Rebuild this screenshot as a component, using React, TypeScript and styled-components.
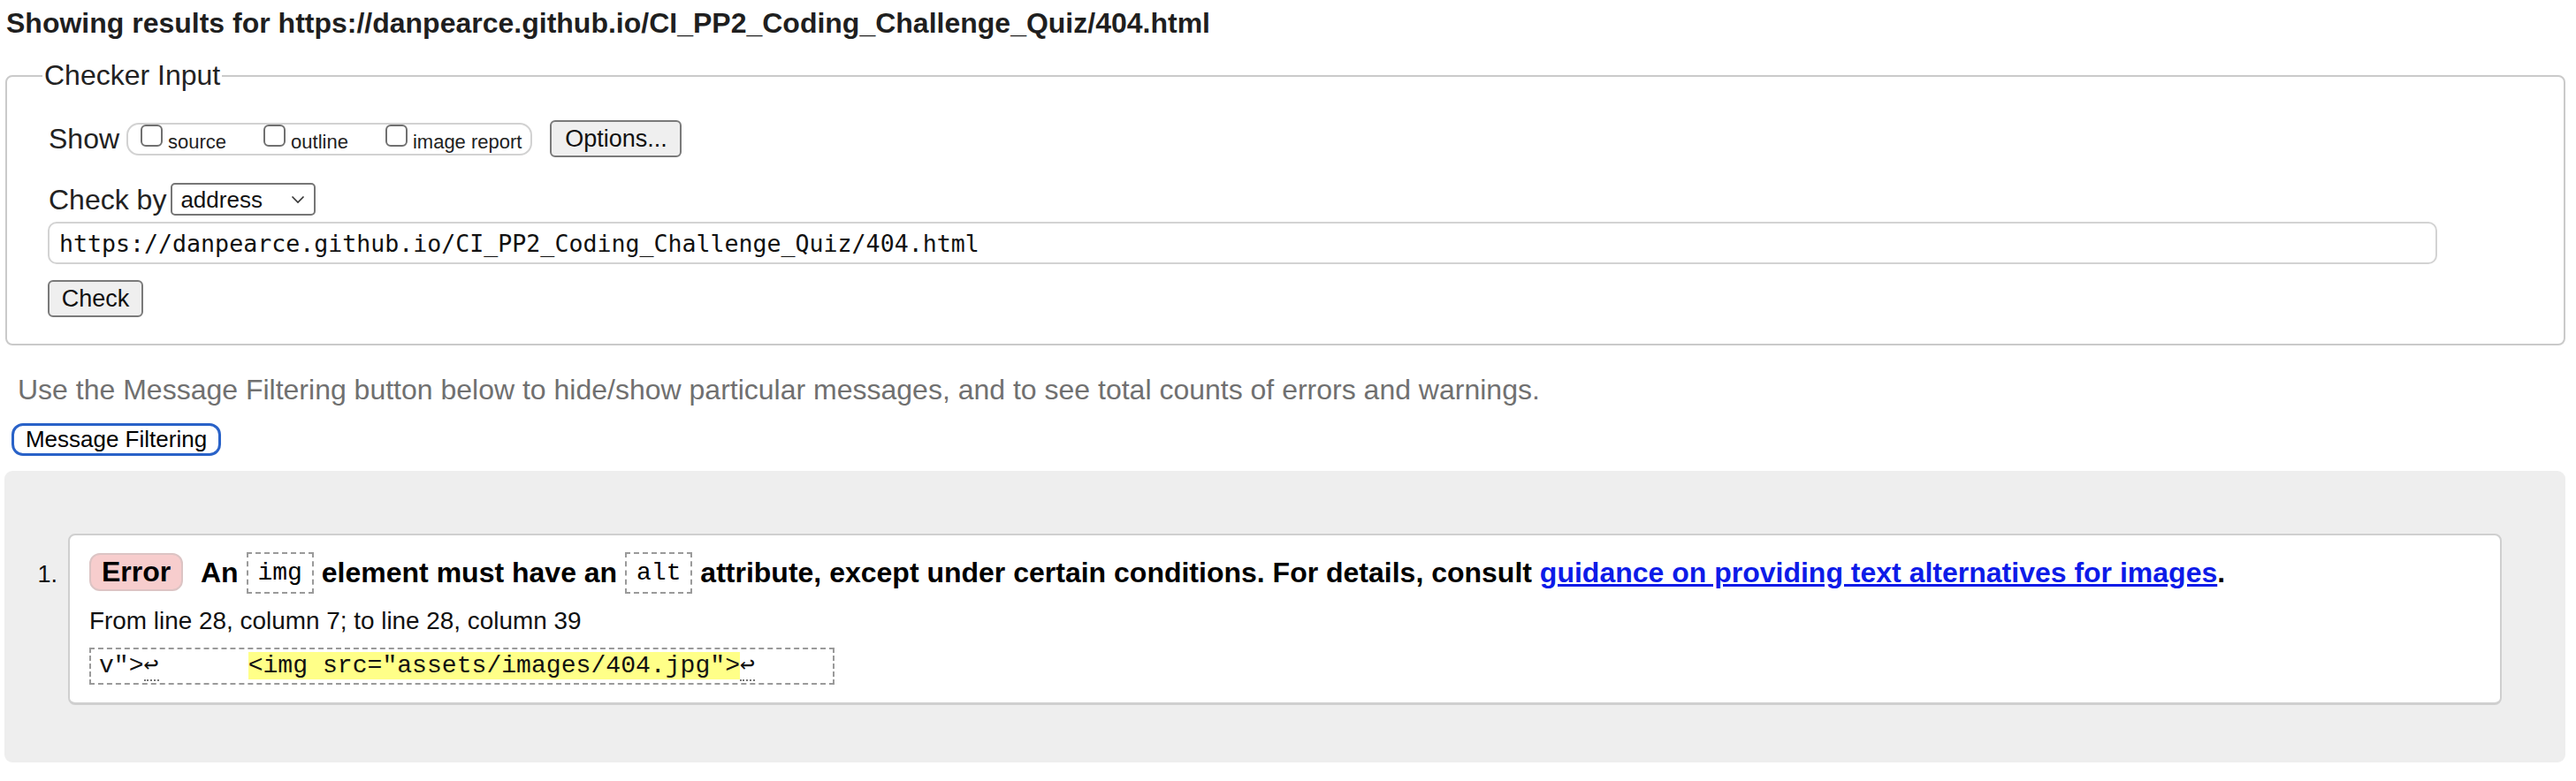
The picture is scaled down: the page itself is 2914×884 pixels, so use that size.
import React from "react";
import styled, { createGlobalStyle } from "styled-components";

const Global = createGlobalStyle`
  html, body { margin: 0; padding: 0; background: #fff; }
  body { font-family: "Liberation Sans", Arial, Helvetica, sans-serif; color: #222; }
  * { box-sizing: border-box; }
`;

const Page = styled.div`
  padding: 0 12px 20px 5px;
  width: 2914px;
`;

const Heading = styled.h2`
  margin: 8px 0 0 2px;
  font-size: 32px;
  line-height: 37px;
  font-weight: 700;
  color: #1f1f1f;
`;

const Fieldset = styled.fieldset`
  margin: 22px 0 0 1px;
  border: 2px solid #cacaca;
  border-radius: 8px;
  padding: 32px 142px 30px 47px;
  min-inline-size: 0;
`;

const Legend = styled.legend`
  font-size: 32px;
  line-height: 37px;
  padding: 0 2px;
  margin-left: -7px;
  color: #222;
`;

const Row = styled.div<{ $h: number; $mt?: number }>`
  display: flex;
  align-items: center;
  height: ${(p) => p.$h}px;
  margin-top: ${(p) => p.$mt ?? 0}px;
`;

const Label = styled.span`
  font-size: 32px;
  color: #222;
  margin-right: 8px;
  line-height: 1;
`;

const Pill = styled.div`
  display: flex;
  align-items: flex-start;
  height: 37px;
  border: 2px solid #d2d2d2;
  border-radius: 14px;
  padding: 0 10px 0 14px;
  gap: 42px;
`;

const CheckItem = styled.label`
  display: flex;
  align-items: flex-start;
  font-size: 22px;
  color: #222;
`;

const Box = styled.input`
  appearance: none;
  width: 25px;
  height: 25px;
  margin: 0 6px 0 0;
  border: 2px solid #707070;
  border-radius: 6px;
  background: #fff;
`;

const CheckText = styled.span`
  padding-top: 9px;
  line-height: 22px;
`;

const Button = styled.button<{ $w: number }>`
  width: ${(p) => p.$w}px;
  height: 42px;
  font-family: "Liberation Sans", Arial, sans-serif;
  font-size: 27px;
  color: #111;
  background: #efefef;
  border: 2px solid #7a7a7a;
  border-radius: 6px;
  padding: 0;
`;

const OptionsButton = styled(Button)`
  margin-left: 20px;
`;

const SelectWrap = styled.div`
  position: relative;
  width: 164px;
  height: 37px;
  margin-left: -3px;
`;

const Select = styled.select`
  appearance: none;
  width: 100%;
  height: 100%;
  border: 2px solid #767676;
  border-radius: 5px;
  background: #fff;
  font-family: "Liberation Sans", Arial, sans-serif;
  font-size: 26px;
  color: #111;
  padding: 0 0 0 9px;
`;

const Chevron = styled.svg`
  position: absolute;
  right: 12px;
  top: 14px;
  width: 16px;
  height: 10px;
  pointer-events: none;
`;

const UrlInput = styled.input`
  display: block;
  width: 100%;
  height: 48px;
  margin: 7px 0 0 -1px;
  border: 2px solid #d3d3d3;
  border-radius: 10px;
  padding: 0 0 0 11px;
  font-family: "DejaVu Sans Mono", monospace;
  font-size: 26.6px;
  color: #111;
`;

const CheckButton = styled(Button)`
  display: block;
  margin: 18px 0 0 -1px;
`;

const Hint = styled.p`
  margin: 32px 0 0 15px;
  font-size: 32px;
  line-height: 37px;
  color: #707070;
`;

const FilterButton = styled.button`
  display: block;
  margin: 19px 0 0 8px;
  width: 237px;
  height: 37px;
  border: 3px solid #2962c8;
  border-radius: 13px;
  background: #fff;
  font-family: "Liberation Sans", Arial, sans-serif;
  font-size: 26px;
  color: #000;
  padding: 0;
`;

const Results = styled.div`
  margin-top: 17px;
  background: #eeeeee;
  border-radius: 9px;
  padding: 71px 72px 65px 35px;
`;

const Item = styled.div`
  display: flex;
  align-items: flex-start;
`;

const Num = styled.div`
  width: 25px;
  margin-right: 12px;
  text-align: right;
  font-size: 27px;
  color: #111;
  padding-top: 31px;
  line-height: 30px;
`;

const Card = styled.div`
  flex: 1;
  background: #fff;
  border: 2px solid #cfcfcf;
  border-bottom-width: 3px;
  border-radius: 8px;
  padding: 19px 22px 20px 22px;
`;

const Title = styled.p`
  margin: 0;
  font-size: 32px;
  font-weight: 700;
  line-height: 47px;
  height: 47px;
  color: #000;
  white-space: nowrap;
`;

const Badge = styled.span`
  display: inline-block;
  height: 43px;
  line-height: 39px;
  padding: 0 12px;
  margin: 1px 12px 0 0;
  background: #f7cdcd;
  border: 2px solid #dcc4c4;
  border-radius: 12px;
  color: #000;
  vertical-align: top;
`;

const Code = styled.code`
  display: inline-block;
  font-family: "Liberation Mono", "Courier New", monospace;
  font-weight: 400;
  font-size: 28px;
  line-height: 43px;
  padding: 0 11px;
  border: 2px dashed #9a9a9a;
  vertical-align: top;
`;

const Link = styled.a`
  color: #0d1be8;
  text-decoration: underline;
`;

const Location = styled.p`
  margin: 15px 0 0;
  font-size: 27.9px;
  line-height: 32px;
  color: #111;
`;

const Extract = styled.pre`
  width: fit-content;
  margin: 14px 0 0;
  border: 2px dashed #9a9a9a;
  padding: 0 4px 0 9px;
  height: 42px;
  line-height: 38px;
  font-family: "Liberation Mono", "Courier New", monospace;
  font-size: 28.1px;
  color: #111;
`;

const Mark = styled.mark`
  background: #ffff88;
  color: #111;
  padding: 0;
`;

const Lf = styled.span`
  border-bottom: 2px dotted #777;
`;

export default function App() {
  return (
    <>
      <Global />
      <Page>
        <Heading>Showing results for https://danpearce.github.io/CI_PP2_Coding_Challenge_Quiz/404.html</Heading>
        <Fieldset>
          <Legend>Checker Input</Legend>
          <Row $h={42}>
            <Label>Show</Label>
            <Pill>
              <CheckItem>
                <Box type="checkbox" />
                <CheckText>source</CheckText>
              </CheckItem>
              <CheckItem>
                <Box type="checkbox" />
                <CheckText>outline</CheckText>
              </CheckItem>
              <CheckItem>
                <Box type="checkbox" />
                <CheckText>image report</CheckText>
              </CheckItem>
            </Pill>
            <OptionsButton $w={149}>Options...</OptionsButton>
          </Row>
          <Row $h={37} $mt={29}>
            <Label>Check by</Label>
            <SelectWrap>
              <Select defaultValue="address">
                <option value="address">address</option>
              </Select>
              <Chevron viewBox="0 0 16 10">
                <path d="M1.5 1.5 L8 8 L14.5 1.5" fill="none" stroke="#333" strokeWidth="1.6" />
              </Chevron>
            </SelectWrap>
          </Row>
          <UrlInput readOnly value="https://danpearce.github.io/CI_PP2_Coding_Challenge_Quiz/404.html" />
          <CheckButton $w={108}>Check</CheckButton>
        </Fieldset>
        <Hint>Use the Message Filtering button below to hide/show particular messages, and to see total counts of errors and warnings.</Hint>
        <FilterButton>Message Filtering</FilterButton>
        <Results>
          <Item>
            <Num>1.</Num>
            <Card>
              <Title>
                <Badge>Error</Badge> An <Code>img</Code> element must have an <Code>alt</Code> attribute, except under certain conditions. For details, consult{" "}
                <Link href="#">guidance on providing text alternatives for images</Link>.
              </Title>
              <Location>From line 28, column 7; to line 28, column 39</Location>
              <Extract>
                {'v">'}
                <Lf>↩</Lf>
                {"      "}
                <Mark>{'<img src="assets/images/404.jpg">'}</Mark>
                <Lf>↩</Lf>
                {"     "}
              </Extract>
            </Card>
          </Item>
        </Results>
      </Page>
    </>
  );
}
